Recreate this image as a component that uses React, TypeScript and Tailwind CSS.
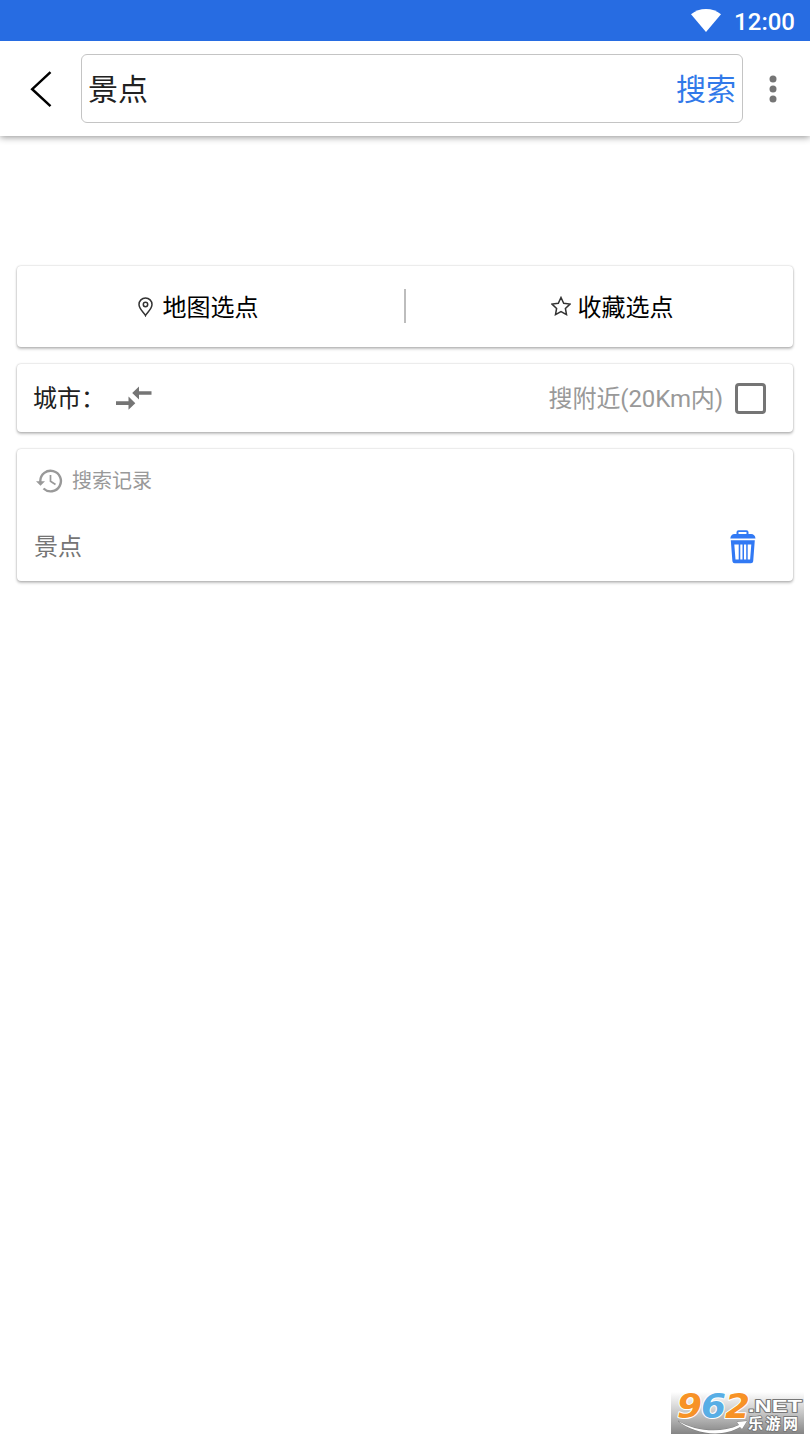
import { useState, type FormEvent, type ReactNode } from 'react';

const HISTORY = ['景点'];

interface CardProps {
  className: string;
  children: ReactNode;
}

const Card = ({ className, children }: CardProps) => (
  <section
    className={`mx-[17px] rounded-[4px] bg-white shadow-[0_0_2px_rgba(0,0,0,0.26),0_2px_3px_rgba(0,0,0,0.24)] ${className}`}
  >
    {children}
  </section>
);

const StatusBar = () => (
  <div className="z-10 flex h-[41px] shrink-0 items-center justify-end bg-[#276ce2] pr-[14px] text-white">
    <svg className="mr-[13px] h-[23px] w-[30px]" viewBox="0 0 30 23" fill="currentColor">
      <path d="M0 5.2C4.3 1.8 9.4 0 15 0s10.700 1.800 15 5.200L15 23z" />
    </svg>
    <span className="pt-[2px] pr-px text-[24px] leading-[30px] font-medium">12:00</span>
  </div>
);

const Header = () => {
  const [keyword, setKeyword] = useState('景点');

  const handleSubmit = (e: FormEvent) => {
    e.preventDefault();
  };

  return (
    <header className="flex h-[95px] shrink-0 items-center shadow-[0_1px_7px_rgba(0,0,0,0.45)]">
      <button type="button" aria-label="返回" className="flex w-[81px] pl-[29px]">
        <svg className="h-[38px] w-[24px]" viewBox="0 0 24 38" fill="none" stroke="#000" strokeWidth="2.5">
          <path d="M21.500 2.200 3.200 19.200l18.300 17" />
        </svg>
      </button>
      <form
        onSubmit={handleSubmit}
        className="flex h-[69px] w-[662px] items-center rounded-[6px] border border-[#c4c4c4] pt-[2px] pl-[6px] pr-[6px]"
      >
        <input
          type="text"
          value={keyword}
          onChange={(e) => setKeyword(e.target.value)}
          className="h-[45px] min-w-0 flex-1 text-[30px] text-[#212121] outline-none"
        />
        <button type="submit" className="text-[30px] leading-[45px] text-[#3179e9]">
          搜索
        </button>
      </form>
      <button type="button" aria-label="更多" className="ml-[26px]">
        <svg className="h-[28px] w-[8px]" viewBox="0 0 8 28" fill="#757575">
          <circle cx="4" cy="4" r="3.500" />
          <circle cx="4" cy="14" r="3.500" />
          <circle cx="4" cy="24" r="3.500" />
        </svg>
      </button>
    </header>
  );
};

const PickPoint = () => (
  <Card className="mt-[130px] grid h-[81px] grid-cols-[1fr_2px_1fr] items-center text-[24px] leading-[36px] text-black">
    <button type="button" className="flex items-center justify-center pr-[25px]">
      <svg className="mr-[10px] h-[20px] w-[15px]" viewBox="0 0 15 20" fill="none" stroke="#333" strokeWidth="1.500">
        <path d="M7.500 18.500C6.500 16 1 12.200 1 7.500a6.500 6.500 0 0 1 13 0c0 4.700-5.500 8.500-6.500 11z" />
        <circle cx="7.500" cy="7.500" r="2.200" />
      </svg>
      <span className="pt-[3px]">地图选点</span>
    </button>
    <div className="mb-px h-[34px] w-[2px] bg-[#bdbdbd]" />
    <button type="button" className="flex items-center justify-center pl-[25px]">
      <svg className="mt-[-1px] mr-[7px] h-[20px] w-[20px]" viewBox="0 0 20 20" fill="none" stroke="#333" strokeWidth="1.500">
        <path d="M10 1.500l2.700 5.800 6.300.8-4.600 4.400 1.100 6.100-5.500-3-5.500 3 1.100-6.100L1 8.100l6.300-.8z" />
      </svg>
      <span className="pt-[3px]">收藏选点</span>
    </button>
  </Card>
);

const CityRow = () => {
  const [nearby, setNearby] = useState(false);

  return (
    <Card className="mt-[17px] flex h-[68px] items-center pl-[16px] pr-[27px] text-[24px] leading-[36px]">
      <span className="pt-[2px] text-[#212121]">城市：</span>
      <svg className="ml-[11px] h-[24px] w-[36px]" viewBox="0 0 36 24" fill="#757575">
        <path d="M0 15.300h12.500V10.500L19.300 17.300l-6.800 6.500v-4.800H0zM35.500 5.200H23V.4L16.200 7l6.800 6.500V8.800h12.500z" />
      </svg>
      <label className="ml-auto flex items-center text-[#999]">
        <span className="pt-[2px] tracking-[-0.1px]">搜附近(20Km内)</span>
        <input
          type="checkbox"
          checked={nearby}
          onChange={(e) => setNearby(e.target.checked)}
          className="ml-[12px] h-[31px] w-[31px] appearance-none rounded-[4px] border-3 border-[#757575] checked:bg-[#3179e9]"
        />
      </label>
    </Card>
  );
};

const TrashIcon = () => (
  <svg className="h-[34px] w-[26px]" viewBox="0 0 26 34" fill="#3179f4">
    <path
      fillRule="evenodd"
      d="M6.500 4V2.300Q6.500.3 8.500.3h8Q18.500.3 18.500 2.300V4H21q4 0 4.500 4.500H.3Q.8 4 4.500 4zM8.500 4h8V2h-8z"
    />
    <path
      fillRule="evenodd"
      d="M.8 10.300h24l-1.600 21q-.2 2-2.300 2H4.700q-2.100 0-2.300-2zM4.300 14.500l1.200 15h3.200v-15zM10.300 14.500v15h2.200v-15zM14 14.500v15h2.200v-15zM17.700 14.500v15h2.400l1.200-15z"
    />
  </svg>
);

const SearchHistory = () => (
  <Card className="mt-[17px] h-[132px]">
    <div className="flex h-[64px] items-center pl-[19px] text-[20px] leading-[30px] text-[#999]">
      <svg className="mr-[9px] h-[24px] w-[27px]" viewBox="0 0 27 24" fill="none" stroke="currentColor">
        <path d="M4.300 13V12a10.300 10.300 0 1 1 3.200 7.500" strokeWidth="2.400" />
        <path d="M0 12.200h9L4.500 16.700z" fill="currentColor" stroke="none" />
        <path d="M14.500 6v6.300l5 3.200" strokeWidth="1.700" />
      </svg>
      搜索记录
    </div>
    {HISTORY.map((item) => (
      <div key={item} className="flex h-[68px] items-center pl-[17px] pr-[37px] text-[24px] leading-[36px] text-[#757575]">
        <span className="flex-1">{item}</span>
        <button type="button" aria-label="删除">
          <TrashIcon />
        </button>
      </div>
    ))}
  </Card>
);

const Watermark = () => (
  <svg
    className="mt-auto mr-[6px] mb-[6px] h-[42px] w-[133px] self-end overflow-visible"
    viewBox="0 0 133 42"
    fontFamily="Liberation Sans, Noto Sans CJK SC, sans-serif"
    fontWeight="bold"
    paintOrder="stroke"
    strokeLinejoin="round"
  >
    <defs>
      <linearGradient id="plate" x1="0" y1="0" x2="0" y2="1">
        <stop offset="0" stopColor="#fff" />
        <stop offset="0.500" stopColor="#c6c6c6" />
        <stop offset="1" stopColor="#858585" />
      </linearGradient>
    </defs>
    <rect width="133" height="42" fill="url(#plate)" />
    <g fontFamily="DejaVu Sans, sans-serif" fontSize="33" fontStyle="italic" stroke="#fff" strokeWidth="2">
      <text x="6" y="26" textLength="25" lengthAdjust="spacingAndGlyphs" fill="#f79226">9</text>
      <text x="30" y="26" textLength="25" lengthAdjust="spacingAndGlyphs" fill="#58aee5">6</text>
      <text x="54" y="26" textLength="25" lengthAdjust="spacingAndGlyphs" fill="#f79226">2</text>
    </g>
    <path d="M7 29c17 10 42 13 61 4l-2-3 10-1-5 8-2-2c-18 11-46 7-62-6z" fill="#fff" stroke="#777" strokeWidth="0.700" />
    <g fill="#fff" stroke="#777" strokeWidth="1.800">
      <text x="77" y="20" fontSize="17" textLength="54" lengthAdjust="spacingAndGlyphs">.NET</text>
      <text x="77" y="37" fontSize="15" textLength="50">乐游网</text>
    </g>
  </svg>
);

export default function App() {
  return (
    <div className="flex min-h-[1440px] w-full flex-col bg-white font-['Roboto','Noto_Sans_CJK_SC',sans-serif]">
      <StatusBar />
      <Header />
      <PickPoint />
      <CityRow />
      <SearchHistory />
      <Watermark />
    </div>
  );
}
